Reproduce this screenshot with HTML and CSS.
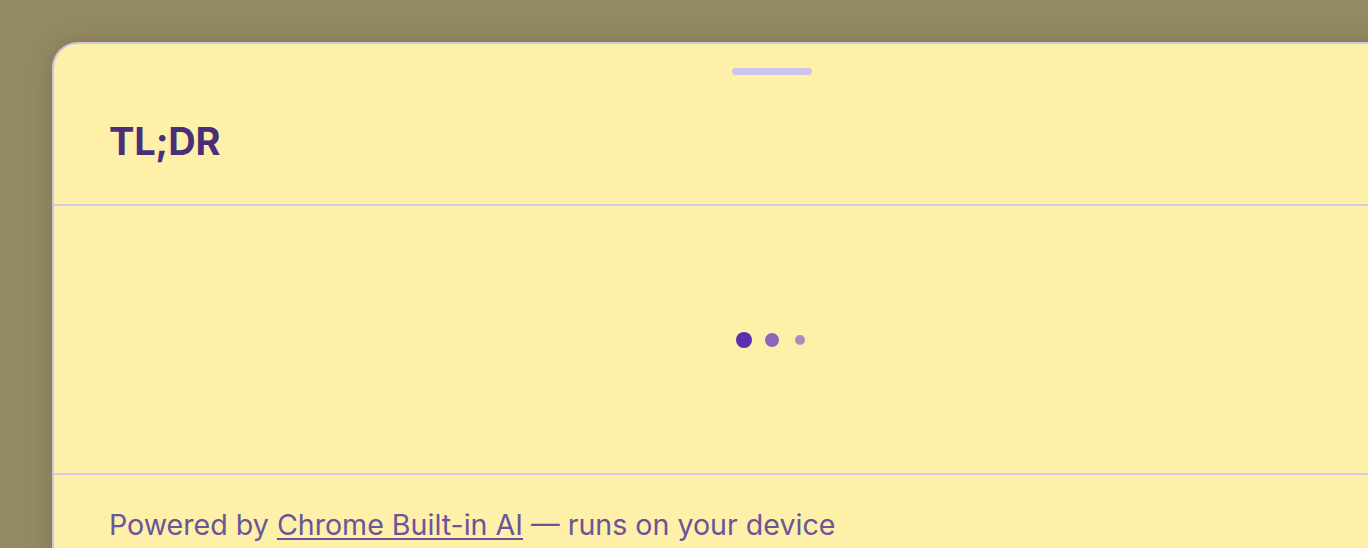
FILE: index.html
```html
<!DOCTYPE html>
<html lang="en">
<head>
<meta charset="utf-8">
<title>TL;DR</title>
<link rel="stylesheet" href="styles.css">
</head>
<body>
<div class="sheet">
  <header class="sheet-header">
    <div class="handle"></div>
    <h1 class="title">TL;DR</h1>
  </header>
  <main class="sheet-body">
    <div class="loader">
      <span class="slot"><span class="dot dot-1"></span></span>
      <span class="slot"><span class="dot dot-2"></span></span>
      <span class="slot"><span class="dot dot-3"></span></span>
    </div>
  </main>
  <footer class="sheet-footer">
    <p class="powered">Powered by <a class="link" href="#">Chrome Built-in AI</a> — runs on your device</p>
  </footer>
</div>
</body>
</html>
```

FILE: styles.css
```css
html, body {
  margin: 0;
  padding: 0;
}
body {
  background: #948b65;
  overflow: hidden;
  height: 548px;
  font-family: Inter, "Noto Sans", "Liberation Sans", sans-serif;
}
.sheet {
  margin: 42px 0 0 52px;
  width: 1436px;
  height: 560px;
  background: #fef0a8;
  border: 2px solid #cdc4e6;
  border-bottom: none;
  border-radius: 26px 26px 0 0;
  box-shadow: 0 0 28px rgba(60, 50, 20, 0.22);
  display: flex;
  flex-direction: column;
}
.sheet-header {
  height: 162px;
  flex: none;
  box-sizing: border-box;
  padding: 24px 0 0 55px;
  border-bottom: 2px solid #d3c9e6;
  display: flex;
  flex-direction: column;
}
.handle {
  width: 80px;
  height: 7px;
  border-radius: 4px;
  background: #cdc3eb;
  align-self: center;
  margin-left: -55px;
}
.title {
  margin: 43px 0 0;
  font-size: 38px;
  line-height: 46px;
  font-weight: 700;
  color: #4a2f78;
  letter-spacing: -0.2px;
}
.sheet-body {
  height: 269px;
  flex: none;
  box-sizing: border-box;
  display: flex;
  align-items: center;
  justify-content: center;
  border-bottom: 2px solid #d3c9e6;
}
.loader {
  display: flex;
  align-items: center;
  gap: 12px;
}
.slot {
  width: 16px;
  height: 16px;
  display: flex;
  align-items: center;
  justify-content: center;
}
.dot {
  display: block;
  border-radius: 50%;
}
.dot-1 {
  width: 16px;
  height: 16px;
  background: #5a2eb0;
}
.dot-2 {
  width: 14px;
  height: 14px;
  background: #8c68ba;
}
.dot-3 {
  width: 10px;
  height: 10px;
  background: #a98dbf;
}
.sheet-footer {
  padding: 32px 0 0 55px;
}
.powered {
  margin: 0;
  font-size: 28.6px;
  line-height: 36px;
  color: #6a5599;
}
.link {
  color: #6a5599;
  text-decoration: underline;
  text-underline-offset: 3px;
  text-decoration-thickness: 2px;
}
```
